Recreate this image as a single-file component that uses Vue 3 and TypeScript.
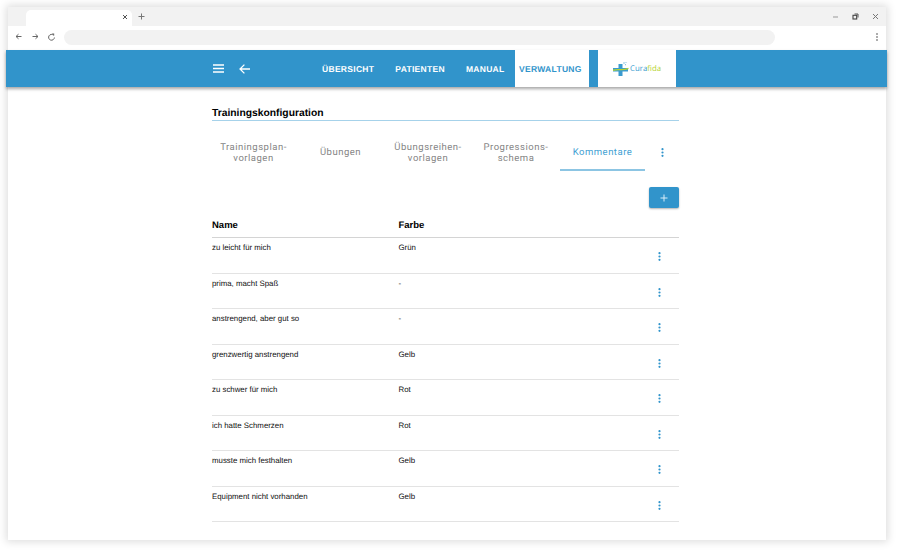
<script setup lang="ts">
const navItems = [
  { label: 'ÜBERSICHT', cls: 'n1' },
  { label: 'PATIENTEN', cls: 'n2' },
  { label: 'MANUAL', cls: 'n3' },
]
const tabs = [
  { lines: ['Trainingsplan-', 'vorlagen'], active: false, cls: 't1' },
  { lines: ['Übungen'], active: false, cls: 't2' },
  { lines: ['Übungsreihen-', 'vorlagen'], active: false, cls: 't3' },
  { lines: ['Progressions-', 'schema'], active: false, cls: 't4' },
  { lines: ['Kommentare'], active: true, cls: 't5' },
]
const rows = [
  ['zu leicht für mich', 'Grün'],
  ['prima, macht Spaß', '-'],
  ['anstrengend, aber gut so', '-'],
  ['grenzwertig anstrengend', 'Gelb'],
  ['zu schwer für mich', 'Rot'],
  ['ich hatte Schmerzen', 'Rot'],
  ['musste mich festhalten', 'Gelb'],
  ['Equipment nicht vorhanden', 'Gelb'],
]
</script>

<template>
  <div class="page">
    <div class="window">
      <div class="tabstrip">
        <div class="browser-tab">
          <svg class="tab-x" width="6" height="6" viewBox="0 0 6 6"><path d="M1 1l4 4M5 1L1 5" stroke="#555" stroke-width="1" /></svg>
        </div>
        <svg class="tab-plus" width="7" height="7" viewBox="0 0 7 7"><path d="M3.500 .5v6M.5 3.500h6" stroke="#777" stroke-width="1" /></svg>
        <div class="win-controls">
          <svg width="7" height="7" viewBox="0 0 7 7"><path d="M1 4h5" stroke="#999" stroke-width="1" /></svg>
          <svg width="7" height="7" viewBox="0 0 7 7"><rect x="1" y="2.300" width="3.700" height="3.700" fill="none" stroke="#444" stroke-width="1.100" /><path d="M2.500 1h3.500v3.500" fill="none" stroke="#555" stroke-width="1" /></svg>
          <svg width="7" height="7" viewBox="0 0 7 7"><path d="M1 1l5 5M6 1L1 6" stroke="#777" stroke-width="1" /></svg>
        </div>
      </div>
      <div class="toolbar">
        <svg width="7" height="7" viewBox="0 0 7 7"><path d="M6.500 3.500H1M3.500 1.200L1 3.500 3.500 5.800" fill="none" stroke="#666" stroke-width="1" /></svg>
        <svg width="7" height="7" viewBox="0 0 7 7"><path d="M.5 3.500H6M3.500 1.200L6 3.500 3.500 5.800" fill="none" stroke="#666" stroke-width="1" /></svg>
        <svg width="7" height="8" viewBox="0 0 7 8"><path d="M5.600 2.300A2.900 2.900 0 1 0 6.400 4.500" fill="none" stroke="#666" stroke-width="1" /><path d="M3.800 .4l2.400.1v2.300z" fill="#666" /></svg>
        <div class="address"></div>
        <svg class="kebab-small" width="2" height="8" viewBox="0 0 2 8"><circle cx="1" cy="1" r=".8" fill="#444" /><circle cx="1" cy="4" r=".8" fill="#444" /><circle cx="1" cy="7" r=".8" fill="#444" /></svg>
      </div>

      <header class="appbar">
        <div class="bar-left">
          <svg width="11" height="9" viewBox="0 0 11 9"><path d="M0 1h11M0 4.500h11M0 8h11" stroke="#fff" stroke-width="1.300" /></svg>
          <svg width="11" height="10" viewBox="0 0 11 10"><path d="M11 5H1.200M5.400 .6 1 5l4.400 4.400" fill="none" stroke="#fff" stroke-width="1.300" /></svg>
        </div>
        <nav class="nav">
          <a v-for="n in navItems" :key="n.label" class="nav-item" :class="n.cls">{{ n.label }}</a>
          <a class="nav-item active">VERWALTUNG</a>
        </nav>
        <div class="logo">
          <svg width="16" height="16" viewBox="0 0 16 16">
            <path d="M5.500 3h4v4H15v3.500H9.500V15h-4v-4.500H0V7h5.500z" fill="#3a9bd0" />
            <path d="M0 9.300C5 7.500 10 10 15.500 7.300" fill="none" stroke="#b5d334" stroke-width="1.300" />
            <circle cx="11" cy="2" r=".8" fill="#7fbfe0" />
            <circle cx="13" cy="1.500" r=".6" fill="#7fbfe0" />
            <circle cx="12.500" cy="3.700" r=".6" fill="#7fbfe0" />
          </svg>
          <span class="logo-text"><span class="cura">Cura</span><span class="fida">fida</span></span>
        </div>
      </header>

      <main class="content">
        <h1 class="title">Trainingskonfiguration</h1>
        <div class="tabs">
          <div v-for="t in tabs" :key="t.cls" class="tab" :class="[t.cls, { on: t.active }]">
            <span v-for="l in t.lines" :key="l">{{ l }}</span>
          </div>
          <div class="tab-more">
            <svg width="3" height="9" viewBox="0 0 3 9"><circle cx="1.500" cy="1.200" r="1.100" fill="#3194cb" /><circle cx="1.500" cy="4.500" r="1.100" fill="#3194cb" /><circle cx="1.500" cy="7.800" r="1.100" fill="#3194cb" /></svg>
          </div>
        </div>
        <div class="actions">
          <button class="add" type="button">
            <svg width="8" height="8" viewBox="0 0 8 8"><path d="M4 .5v7M.5 4h7" stroke="#d9edf8" stroke-width="1" /></svg>
          </button>
        </div>
        <div class="thead">
          <span class="c-name">Name</span>
          <span class="c-color">Farbe</span>
        </div>
        <div v-for="r in rows" :key="r[0]" class="row">
          <span class="c-name">{{ r[0] }}</span>
          <span class="c-color">{{ r[1] }}</span>
          <svg class="row-dots" width="3" height="9" viewBox="0 0 3 9"><circle cx="1.500" cy="1.200" r="1.100" fill="#3194cb" /><circle cx="1.500" cy="4.500" r="1.100" fill="#3194cb" /><circle cx="1.500" cy="7.800" r="1.100" fill="#3194cb" /></svg>
        </div>
      </main>
    </div>
  </div>
</template>

<style>
html, body { margin: 0; background: #fff; }
</style>

<style scoped>
.page {
  width: 900px;
  height: 558px;
  padding: 7px 14px 0 8px;
  box-sizing: border-box;
  overflow: hidden;
  background: #fff;
  font-family: "Liberation Sans", Arial, sans-serif;
  text-rendering: geometricPrecision;
}
.window {
  height: 533px;
  background: #fff;
  box-shadow: 0 0 8px 2px rgba(0, 0, 0, .13);
  display: flex;
  flex-direction: column;
}
.tabstrip {
  height: 19px;
  background: #f2f2f2;
  display: flex;
  align-items: flex-end;
  padding-left: 18px;
  flex: none;
}
.browser-tab {
  width: 106px;
  height: 16px;
  background: #fff;
  border-radius: 5px 5px 0 0;
  display: flex;
  align-items: center;
  justify-content: flex-end;
  padding: 0 4px 3px 0;
  box-sizing: border-box;
}
.tab-plus { margin: 0 0 6px 6px; }
.win-controls {
  margin-left: auto;
  display: flex;
  gap: 13px;
  padding: 0 7px 6px 0;
}
.toolbar {
  height: 21px;
  display: flex;
  align-items: center;
  padding: 0 5px 0 7px;
  gap: 9.500px;
  flex: none;
  background: #fff;
}
.address {
  width: 711px;
  height: 15px;
  margin: 1px 0 0 -1px;
  background: #f2f2f2;
  border-radius: 8px;
}
.kebab-small {
  margin-left: auto;
  margin-right: 3px;
}
.appbar {
  height: 37px;
  margin: 3px -1px 0 -2px;
  background: #3194cb;
  box-shadow: 0 2px 3px rgba(0, 0, 0, .35);
  display: flex;
  align-items: stretch;
  flex: none;
  position: relative;
  padding-left: 207px;
}
.bar-left {
  display: flex;
  align-items: center;
  gap: 15px;
  width: 109px;
  flex: none;
}
.nav { display: flex; align-items: stretch; }
.nav-item {
  display: flex;
  align-items: center;
  color: #fff;
  font-size: 8.500px;
  font-weight: 700;
  letter-spacing: .3px;
}
.n1 { margin-right: 21px; }
.n2 { margin-right: 21px; }
.n3 { margin-right: 10.500px; }
.active {
  background: #fff;
  color: #3194cb;
  width: 74px;
  box-sizing: border-box;
  padding-left: 4px;
}
.logo {
  width: 78px;
  margin-left: 9px;
  background: #fff;
  display: flex;
  align-items: center;
  justify-content: center;
  gap: 1px;
  flex: none;
}
.logo-text { font-family: "Open Sans", sans-serif; font-size: 7.800px; }
.cura { color: #3a9bd0; }
.fida { color: #b5d334; }
.content {
  width: 467px;
  margin: 17px 0 0 204px;
  display: flex;
  flex-direction: column;
}
.title {
  margin: 0;
  height: 16px;
  font-size: 10.300px;
  line-height: 19px;
  font-weight: 700;
  color: #000;
  border-bottom: 1px solid #a6d2ea;
}
.tabs {
  display: flex;
  height: 50px;
  margin-left: -2px;
  flex: none;
}
.tab {
  display: flex;
  flex-direction: column;
  align-items: center;
  justify-content: center;
  font-family: Roboto, sans-serif;
  font-size: 9.500px;
  line-height: 11px;
  letter-spacing: .5px;
  color: #858585;
  box-sizing: border-box;
  height: 50px;
  padding-top: 13px;
}
.t1, .t2 { width: 87px; }
.t3 { width: 88px; }
.t4 { width: 88px; }
.t5 { width: 85px; }
.on {
  color: #3f9fd3;
  border-bottom: 2px solid #8cc5e3;
  padding-top: 15px;
}
.tab-more {
  width: 34px;
  padding-top: 12px;
  display: flex;
  align-items: center;
  justify-content: center;
}
.actions {
  display: flex;
  justify-content: flex-end;
  margin-top: 16px;
  flex: none;
}
.add {
  width: 30px;
  height: 21px;
  padding: 0;
  border: 0;
  border-radius: 2px;
  background: #3194cb;
  box-shadow: 0 1px 2px rgba(0, 0, 0, .3);
  display: flex;
  align-items: center;
  justify-content: center;
}
.thead {
  display: flex;
  height: 25px;
  margin-top: 5px;
  align-items: center;
  box-sizing: border-box;
  border-bottom: 1px solid #d4d4d4;
  font-size: 9.500px;
  font-weight: 700;
  color: #000;
  flex: none;
}
.c-name { width: 186.500px; flex: none; }
.c-color { flex: 1; }
.row {
  display: flex;
  align-items: flex-start;
  height: 35.500px;
  box-sizing: border-box;
  padding-top: 4px;
  border-bottom: 1px solid #e3e3e3;
  font-size: 7.850px;
  line-height: 11px;
  color: #111;
  flex: none;
}
.row-dots {
  flex: none;
  margin: 10px 18.500px 0 0;
}
</style>
